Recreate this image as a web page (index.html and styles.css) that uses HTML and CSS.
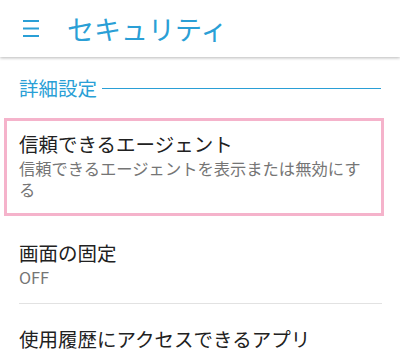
FILE: index.html
```html
<!DOCTYPE html>
<html lang="ja">
<head>
<meta charset="utf-8">
<link rel="stylesheet" href="styles.css">
</head>
<body>
<header class="appbar">
  <svg class="menu" width="16" height="17" viewBox="0 0 16 17"><rect x="0" y="0" width="16" height="2" fill="#2a9fd6"/><rect x="0" y="7.5" width="16" height="2" fill="#2a9fd6"/><rect x="0" y="15" width="16" height="2" fill="#2a9fd6"/></svg>
  <h1 class="title">セキュリティ</h1>
</header>
<main class="content">
  <div class="section">
    <span class="section-label">詳細設定</span>
    <span class="section-line"></span>
  </div>
  <div class="item item-highlight">
    <div class="item-title">信頼できるエージェント</div>
    <div class="item-sub">信頼できるエージェントを表示または無効にする</div>
  </div>
  <div class="item item-plain">
    <div class="item-title">画面の固定</div>
    <div class="item-sub">OFF</div>
  </div>
  <div class="divider"></div>
  <div class="item item-last">
    <div class="item-title">使用履歴にアクセスできるアプリ</div>
  </div>
</main>
</body>
</html>
```
FILE: styles.css
```css
html, body {
  margin: 0;
  padding: 0;
  background: #ffffff;
  width: 400px;
  height: 360px;
  overflow: hidden;
  font-family: "Noto Sans CJK JP", "Noto Sans", sans-serif;
}
.appbar {
  height: 57px;
  display: flex;
  align-items: center;
  background: #ffffff;
  box-shadow: 0 1px 3px rgba(0,0,0,0.28);
  position: relative;
}
.menu {
  margin-left: 23px;
  flex: none;
}
.title {
  margin: 0 0 0 28px;
  font-size: 27px;
  font-weight: 400;
  color: #2a9fd6;
  line-height: 1;
}
.content {
  padding-top: 18px;
}
.section {
  display: flex;
  align-items: center;
  padding-left: 19px;
  padding-right: 19px;
  height: 26px;
}
.section-label {
  font-size: 19.5px;
  color: #2a9fd6;
  line-height: 1;
}
.section-line {
  flex: 1;
  height: 1px;
  background: #2a9fd6;
  margin-left: 5px;
}
.item {
  padding-left: 19px;
}
.item-highlight {
  margin: 17px 16px 0 4px;
  border: 3px solid #f5b3cb;
  padding: 8px 16px 13px 12px;
}
.item-title {
  font-size: 19.5px;
  color: #212121;
  line-height: 29px;
}
.item-sub {
  font-size: 16.3px;
  color: #757575;
  line-height: 21px;
}
.item-plain {
  padding-top: 22px;
  padding-bottom: 15px;
}
.divider {
  height: 1px;
  background: #e2e2e2;
  margin: 0 18px 0 19px;
}
.item-last {
  padding-top: 20px;
}
```
